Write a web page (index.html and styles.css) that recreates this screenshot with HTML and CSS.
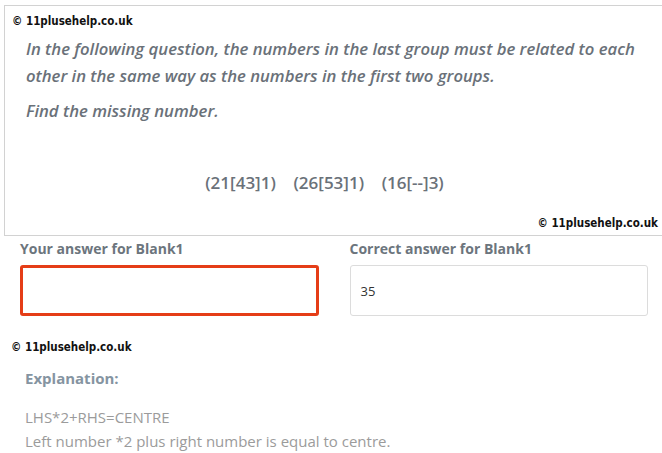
FILE: index.html
```html
<!DOCTYPE html>
<html>
<head>
<meta charset="utf-8">
<link rel="stylesheet" href="styles.css">
</head>
<body>
<div class="question">
  <div class="wm wm-top">© 11plusehelp.co.uk</div>
  <div class="qtext">
    <p class="line">In the following question, the numbers in the last group must be related to each other in the same way as the numbers in the first two groups.</p>
    <p class="line find">Find the missing number.</p>
  </div>
  <div class="groups">(21[43]1)&nbsp;&nbsp;&nbsp; (26[53]1)&nbsp;&nbsp;&nbsp; (16[--]3)</div>
  <div class="wm wm-right">© 11plusehelp.co.uk</div>
</div>
<div class="answers">
  <div class="col">
    <div class="label">Your answer for Blank1</div>
    <div class="field field-wrong"></div>
  </div>
  <div class="col">
    <div class="label">Correct answer for Blank1</div>
    <div class="field">35</div>
  </div>
</div>
<div class="wm wm-expl">© 11plusehelp.co.uk</div>
<div class="explanation">
  <div class="ehead">Explanation:</div>
  <div class="ebody">LHS*2+RHS=CENTRE<br>Left number *2 plus right number is equal to centre.</div>
</div>
</body>
</html>
```
FILE: styles.css
```css
html, body { margin: 0; padding: 0; background: #fff; }
body { font-family: "Open Sans", sans-serif; }

.question {
  margin: 5px 0 0 4px;
  border: 1px solid #d2d2d2;
  border-right: none;
  height: 231px;
  box-sizing: border-box;
  display: flex;
  flex-direction: column;
}
.wm {
  font-family: "DejaVu Sans Condensed", "DejaVu Sans", sans-serif;
  font-stretch: condensed;
  font-weight: bold;
  font-size: 11.5px;
  color: #111;
  line-height: 14px;
}
.wm-top { padding: 8px 0 0 7px; }
.qtext { padding: 7px 10px 0 21px; }
.line {
  margin: 0;
  font-size: 16.7px;
  font-style: italic;
  font-weight: 600;
  color: #6a7179;
  line-height: 27px;
}
.line.find { margin-top: 8px; }
.groups {
  margin-top: 47px;
  text-align: center;
  font-size: 17px;
  font-weight: 600;
  color: #6a7179;
  padding-right: 18px;
  line-height: 24px;
}
.wm-right {
  margin-top: auto;
  text-align: right;
  padding: 0 4px 5px 0;
}

.answers {
  display: flex;
  gap: 30px;
  padding: 3px 14px 0 20px;
}
.col { flex: 1; }
.col + .col { padding-left: 1px; }
.label {
  font-size: 14px;
  font-weight: 700;
  color: #6c757d;
  line-height: 19px;
  margin-bottom: 7px;
}
.field {
  height: 51px;
  box-sizing: border-box;
  border: 1px solid #dcdcdc;
  border-radius: 3px;
  padding: 0 10px;
  display: flex;
  align-items: center;
  font-size: 13px;
  color: #333;
}
.field-wrong { border: 3px solid #e53d17; }

.wm-expl { padding: 24px 0 0 11px; }
.explanation { padding: 14px 0 0 25px; }
.ehead {
  font-size: 15px;
  font-weight: 700;
  color: #8594a1;
  line-height: 20px;
}
.ebody {
  margin-top: 17px;
  font-size: 15px;
  color: #9b9b9b;
  line-height: 24px;
}
```
